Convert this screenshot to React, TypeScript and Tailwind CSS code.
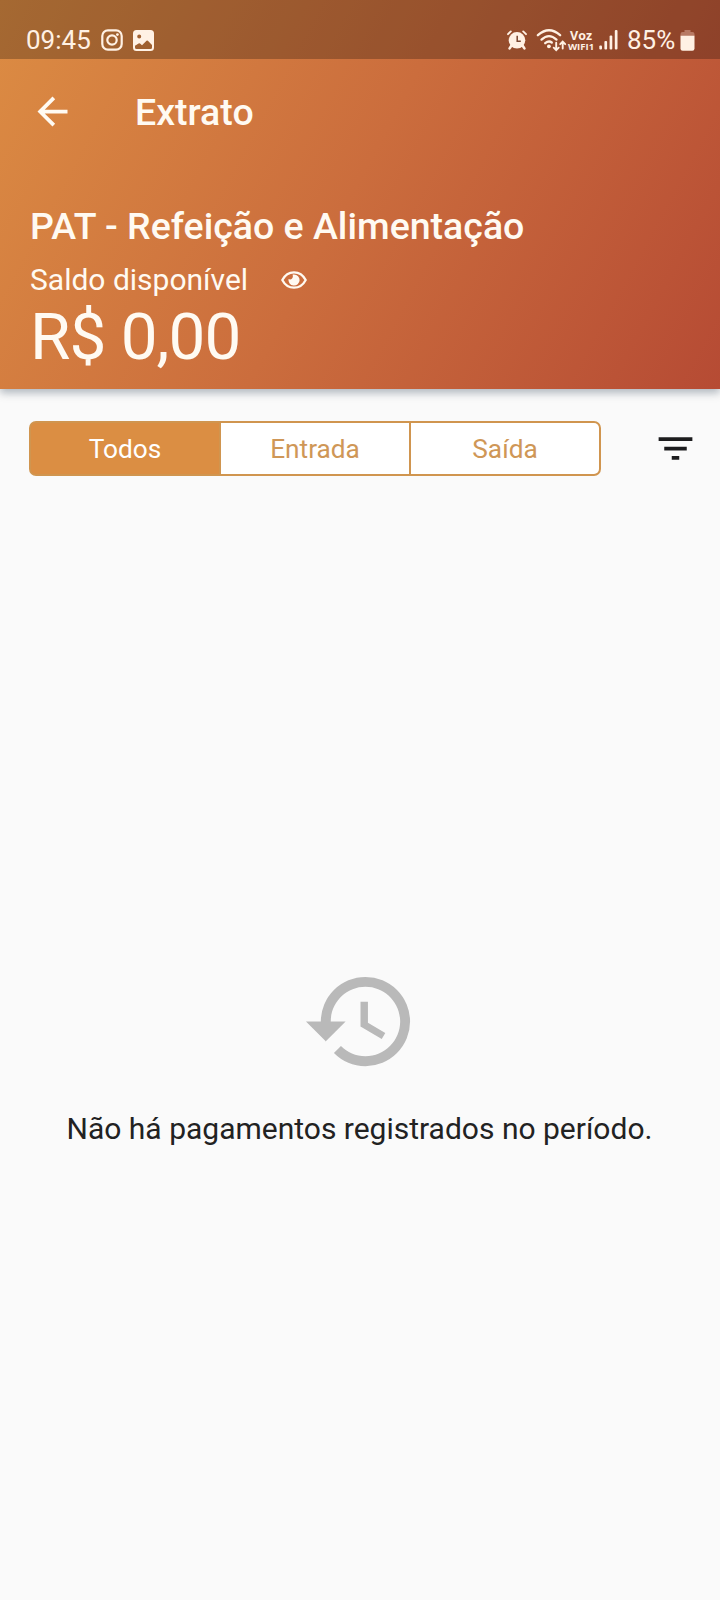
import type { ReactNode } from "react";
import { MdArrowBack, MdFilterList, MdHistory } from "react-icons/md";

function InstagramIcon() {
  return (
    <svg className="ml-[10px] h-[22px] w-[22px]" viewBox="0 0 22 22" fill="none" stroke="currentColor" strokeWidth="2.2">
      <rect x="1.3" y="1.3" width="19.4" height="19.4" rx="5.6" />
      <circle cx="11" cy="11" r="4.7" />
      <circle cx="16.4" cy="5.6" r="1.4" fill="currentColor" stroke="none" />
    </svg>
  );
}

function PictureIcon() {
  return (
    <svg className="ml-[10px] h-[21px] w-[21px]" viewBox="0 0 21 21" fill="currentColor">
      <path
        fillRule="evenodd"
        d="M3.5 0h14A3.5 3.5 0 0 1 21 3.5v14a3.5 3.5 0 0 1-3.5 3.5h-14A3.5 3.5 0 0 1 0 17.5v-14A3.5 3.5 0 0 1 3.5 0ZM6.2 4.4a2 2 0 1 0 0 4a2 2 0 0 0 0-4ZM2 15.8v1.700q0 1.500 1.500 1.500h14q1.500 0 1.500-1.500v-2.600l-4.100-4.100q-.7-.6-1.400 0l-4.500 4.500l-2-1.700q-.7-.6-1.400 0Z"
      />
    </svg>
  );
}

function AlarmIcon() {
  return (
    <svg className="h-[20px] w-[20px]" viewBox="0 0 20 20" fill="none" stroke="currentColor" strokeLinecap="round">
      <circle cx="10" cy="10.3" r="8.3" fill="currentColor" stroke="none" />
      <path d="M1 4.2L3.8 1.4M19 4.2L16.2 1.4" strokeWidth="1.9" />
      <path d="M4.5 15.5L2.600 18.400M15.500 15.500L17.400 18.400" strokeWidth="2.6" />
      <path d="M10.2 5.800v5.400h3.600" stroke="#7a4630" strokeWidth="1.5" strokeLinecap="butt" />
    </svg>
  );
}

function WifiIcon() {
  return (
    <svg className="ml-[9px] h-[24px] w-[31px]" viewBox="0 0 31 24" fill="none" stroke="currentColor" strokeWidth="2.3" strokeLinecap="round">
      <path d="M1.9 7.200Q13 -2.800 24.100 7.200" />
      <path d="M5.5 11.600Q13 4.600 20.500 11.600" />
      <path d="M9.2 15.200Q12.800 12.200 15.800 14.500" />
      <circle cx="12.9" cy="18.3" r="1.9" fill="currentColor" stroke="none" />
      <path d="M20.2 14.800v7M17.700 19.700l2.500 2.500l2.500-2.500M26.700 20.500v-6.500M24.200 16.200l2.500-2.500l2.500 2.500" strokeWidth="1.9" />
    </svg>
  );
}

function SignalIcon() {
  return (
    <svg className="ml-[5px] h-[20px] w-[19px]" viewBox="0 0 19 20" fill="currentColor">
      <rect x="0.3" y="15.6" width="2.7" height="4" rx="1" />
      <rect x="5.4" y="11" width="2.7" height="8.6" rx="1" />
      <rect x="10.6" y="5.5" width="2.7" height="14.1" rx="1" />
      <rect x="15.8" y="0" width="2.7" height="19.6" rx="1" />
    </svg>
  );
}

function BatteryIcon() {
  return (
    <svg className="ml-[5px] h-[21px] w-[15px]" viewBox="0 0 15 21" fill="currentColor">
      <path d="M4.5 0h6v2h2q2 0 2 2v2H.5V4q0-2 2-2h2Z" fill="#b87a64" />
      <path d="M.5 5.800h14V18.500q0 2.200-2.200 2.200h-9.600q-2.200 0-2.200-2.200Z" />
    </svg>
  );
}

function EyeIcon() {
  return (
    <svg className="mt-[2px] ml-[33px] h-[18px] w-[26px]" viewBox="0 0 26 18" fill="none" stroke="currentColor">
      <path d="M1.3 9Q5.300 1.300 13 1.300T24.700 9Q20.700 16.700 13 16.700T1.300 9Z" strokeWidth="2.3" strokeLinejoin="round" />
      <path
        d="M13 3.4a5.600 5.600 0 1 1-5.500 4.700q2.300.8 3.600-.6q1.200-1.600.6-3.900q.7-.2 1.300-.2Z"
        fill="currentColor"
        stroke="none"
      />
    </svg>
  );
}

function StatusBar() {
  return (
    <div className="flex h-[59px] items-start justify-between bg-black/25 pr-[25px] pl-[26px] text-[#fff1e4]">
      <div className="flex h-[80px] items-center">
        <span className="w-[65px] whitespace-nowrap text-[26px] leading-[40px]">09:45</span>
        <InstagramIcon />
        <PictureIcon />
      </div>
      <div className="flex h-[80px] items-center">
        <AlarmIcon />
        <WifiIcon />
        <span className="ml-px w-[26px] pt-[2px] text-center font-['Open_Sans',sans-serif] text-[12.5px] leading-[10px] font-bold whitespace-nowrap">
          Voz
          <br />
          <span className="-mx-1 text-[9.5px]">WIFI1</span>
        </span>
        <SignalIcon />
        <span className="ml-[9px] w-[48px] whitespace-nowrap text-[26px] leading-[40px]">85%</span>
        <BatteryIcon />
      </div>
    </div>
  );
}

function Segment({ children, active = false }: { children: ReactNode; active?: boolean }) {
  return (
    <button
      className={
        active
          ? "flex-1 bg-[#db8e43] pt-[2px] text-white"
          : "flex-1 border-l-2 border-[#d0954f] bg-white pt-[2px] text-[#cf9757] first:border-l-0"
      }
    >
      {children}
    </button>
  );
}

export default function App() {
  return (
    <div className="flex h-[1600px] w-[720px] flex-col overflow-hidden bg-[#fafafa] font-[Roboto,sans-serif]">
      <header className="h-[389px] shrink-0 bg-[linear-gradient(118.4deg,#dc8c43_0%,#cb6d3d_49%,#b64b34_100%)] text-[#fffaf2] shadow-[0_4px_8px_rgba(40,60,80,0.35)]">
        <StatusBar />
        <div className="flex h-[105px] items-center pl-[30px]">
          <MdArrowBack className="h-[45px] w-[45px]" />
          <h1 className="ml-[60px] text-[37.5px] leading-[44px] font-medium">Extrato</h1>
        </div>
        <div className="pt-[40px] pl-[30px]">
          <h2 className="text-[37.5px] leading-[44px] font-medium">PAT - Refeição e Alimentação</h2>
          <div className="mt-[12px] flex h-[38px] items-center">
            <span className="w-[218px] whitespace-nowrap text-[30px]">Saldo disponível</span>
            <EyeIcon />
          </div>
          <p className="text-[65.6px] leading-[78px] tracking-[-0.95px]">R$ 0,00</p>
        </div>
      </header>

      <div className="mt-[32px] flex h-[55px] shrink-0 items-center justify-between pr-[22.5px] pl-[29px]">
        <div className="flex h-[55px] w-[572px] overflow-hidden rounded-[7px] border-2 border-[#d0954f] bg-[#db8e43] text-[26.25px]">
          <Segment active>Todos</Segment>
          <Segment>Entrada</Segment>
          <Segment>Saída</Segment>
        </div>
        <MdFilterList className="h-[45px] w-[45px] text-[#1c1c1e]" />
      </div>

      <main className="flex flex-col items-center pt-[486px] pr-px">
        <MdHistory className="ml-px h-[119px] w-[119px] text-[#b9b9b9]" />
        <p className="mt-[30px] text-[30px] leading-[36px] text-[#222222]">Não há pagamentos registrados no período.</p>
      </main>
    </div>
  );
}
